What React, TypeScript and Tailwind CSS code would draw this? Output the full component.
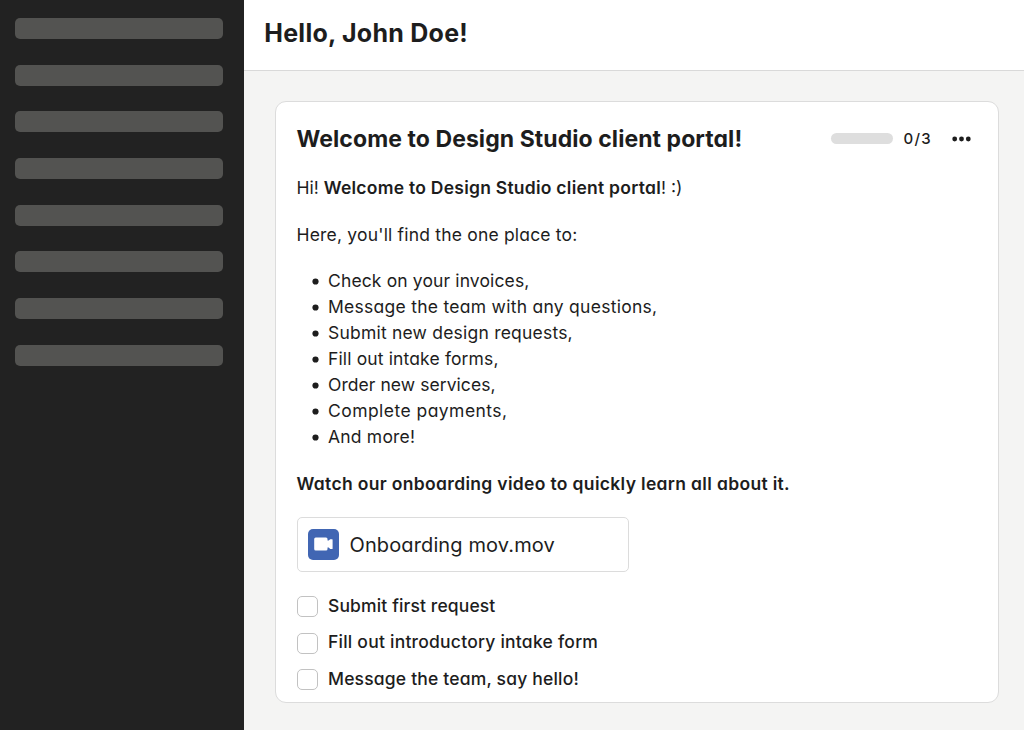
import type { ReactNode } from 'react';

const menuItems = [0, 1, 2, 3, 4, 5, 6, 7];

const perks = [
  { text: 'Check on your invoices,', tracking: 'tracking-[0.13px]' },
  { text: 'Message the team with any questions,', tracking: 'tracking-[0.27px]' },
  { text: 'Submit new design requests,', tracking: 'tracking-[0.21px]' },
  { text: 'Fill out intake forms,', tracking: 'tracking-[0.14px]' },
  { text: 'Order new services,', tracking: 'tracking-[0.06px]' },
  { text: 'Complete payments,', tracking: 'tracking-[0.45px]' },
  { text: 'And more!', tracking: 'tracking-[0.2px]' },
];

const tasks = [
  { text: 'Submit first request', tracking: 'tracking-[0.13px]' },
  { text: 'Fill out introductory intake form', tracking: 'tracking-[0.23px]' },
  { text: 'Message the team, say hello!', tracking: 'tracking-[0.18px]' },
];

function Sidebar() {
  return (
    <aside className="w-[243.5px] shrink-0 bg-[#222222] pt-[18px] pl-[15.4px] pr-[20.5px] flex flex-col gap-[25.7px]">
      {menuItems.map((item) => (
        <div key={item} className="h-[21px] shrink-0 rounded-[5px] bg-[#535351]"></div>
      ))}
    </aside>
  );
}

function VideoIcon() {
  return (
    <span className="flex size-[31px] items-center justify-center rounded-[5px] bg-[#4166b3]">
      <svg width="19" height="14" viewBox="0 0 19 14" fill="#fff">
        <path d="M1.7 .5H12a1.5 1.5 0 0 1 1.5 1.5v1.6h1.2l1.5-1.4h1.9a.5.5 0 0 1 .5.5v8.8a.5.5 0 0 1-.5.5h-1.9l-1.5-1.4h-1.2V12a1.5 1.5 0 0 1-1.5 1.5H1.7A1.5 1.5 0 0 1 .2 12V2A1.5 1.5 0 0 1 1.7.5z" />
      </svg>
    </span>
  );
}

function Paragraph({ children }: { children: ReactNode }) {
  return <p className="mb-[20.7px] leading-[26px] whitespace-nowrap">{children}</p>;
}

export default function App() {
  return (
    <div className="flex h-[730px] w-[1024px] overflow-hidden bg-[#f4f4f3] text-[17.5px] text-[#1d1d1d] font-['Inter',sans-serif] [font-feature-settings:'cv11']">
      <Sidebar />
      <div className="flex-1">
        <header className="flex h-[71px] items-center border-b border-[#d9d9d9] bg-white pl-[20.8px] pb-[3px]">
          <h1 className="text-[25px] font-bold tracking-[0.25px] whitespace-nowrap">Hello, John Doe!</h1>
        </header>
        <main className="pt-[30px] pl-[31.5px] pr-[25px]">
          <section className="h-[602px] rounded-[11px] border border-[#dcdcdc] bg-white pl-[20.5px] pr-[27px] pt-[20px]">
            <div className="mb-[20px] flex h-[33px] items-center">
              <h2 className="flex-1 pt-[2px] text-[23px] font-bold tracking-[0.07px] whitespace-nowrap">Welcome to Design Studio client portal!</h2>
              <div className="h-[11px] w-[62px] rounded-full bg-[#dedede]"></div>
              <span className="ml-[10.5px] w-[28px] pt-px text-[15px] font-medium tracking-[1.2px]">0/3</span>
              <svg className="ml-[20.5px]" width="19" height="6" viewBox="0 0 19 6" fill="#1d1d1d">
                <circle cx="2.7" cy="3" r="2.4" />
                <circle cx="9.5" cy="3" r="2.4" />
                <circle cx="16.3" cy="3" r="2.4" />
              </svg>
            </div>
            <Paragraph>
              <span>Hi! </span>
              <b className="font-semibold tracking-[0.25px]">Welcome to Design Studio client portal</b>
              <span>! :)</span>
            </Paragraph>
            <Paragraph>
              <span className="tracking-[0.19px]">Here, you'll find the one place to:</span>
            </Paragraph>
            <ul className="mb-[20.7px]">
              {perks.map((perk) => (
                <li key={perk.text} className="flex h-[26px] items-center pl-[15px] leading-[26px]">
                  <svg className="mr-[9.5px] size-[7px]" viewBox="0 0 7 7" fill="#1d1d1d">
                    <circle cx="3.5" cy="3.5" r="3.1" />
                  </svg>
                  <span className={`whitespace-nowrap ${perk.tracking}`}>{perk.text}</span>
                </li>
              ))}
            </ul>
            <p className="mb-[19.9px] leading-[26px] font-semibold tracking-[0.33px] whitespace-nowrap">
              Watch our onboarding video to quickly learn all about it.
            </p>
            <div className="flex h-[55px] w-[332px] items-center gap-[10.5px] rounded-[5px] border border-[#dcdcdc] pl-[10.5px]">
              <VideoIcon />
              <span className="pt-[1.5px] text-[20px] tracking-[0.12px] whitespace-nowrap">Onboarding mov.mov</span>
            </div>
            <ul className="mt-[24.2px] flex flex-col gap-[15.4px]">
              {tasks.map((task) => (
                <li key={task.text} className="flex h-[21px] items-center">
                  <span className="mr-[10.5px] size-[21px] rounded-[5px] border-[1.5px] border-[#c2c2c2] bg-white"></span>
                  <span className={`pb-[1.6px] font-medium whitespace-nowrap ${task.tracking}`}>{task.text}</span>
                </li>
              ))}
            </ul>
          </section>
        </main>
      </div>
    </div>
  );
}
